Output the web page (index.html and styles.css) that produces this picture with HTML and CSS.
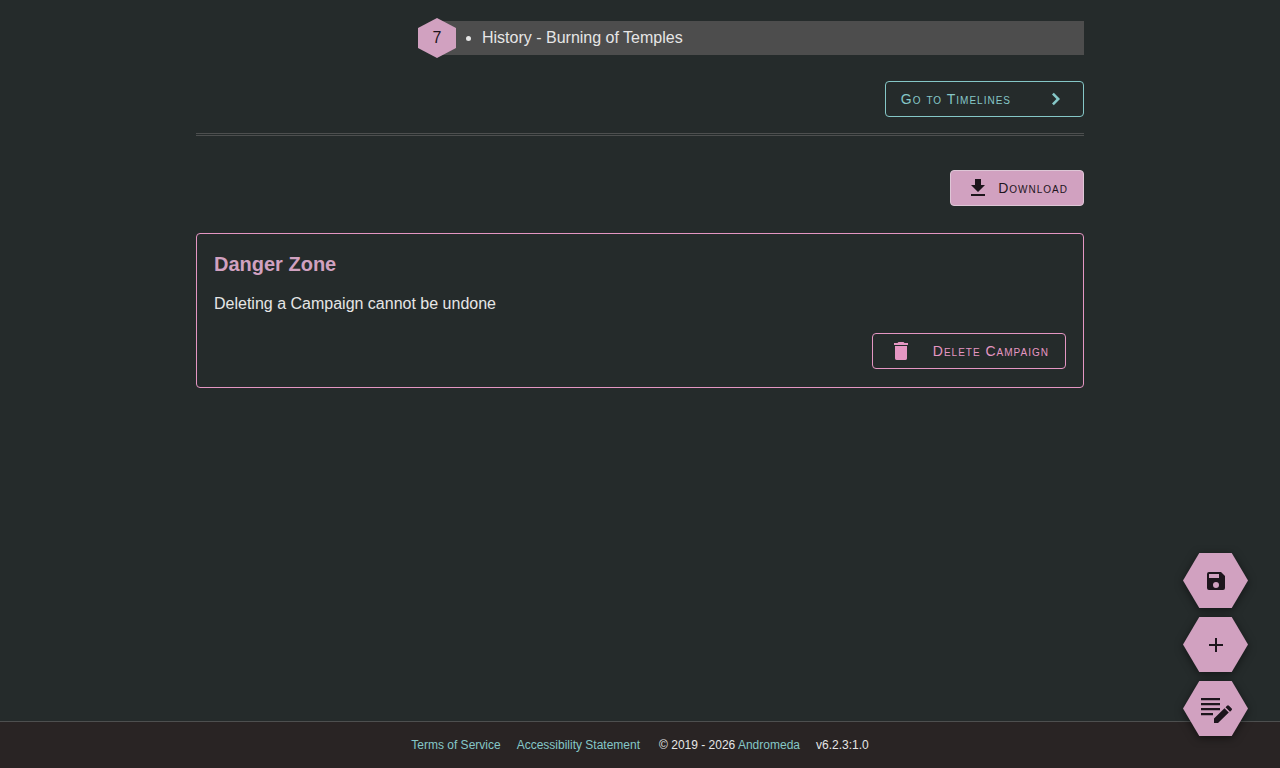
FILE: index.html
```
<!DOCTYPE html>
<html lang="en">
  <head>
    <meta charset="UTF-8" />
    <meta name="viewport" content="width=device-width, initial-scale=1.0" />
    <title>Campaign</title>
    <link rel="stylesheet" href="styles.css">
  </head>
  <body>
    <main class="container">
      <section class="timeline">
        <div class="event">
          <span class="event-count">7</span>
          <ul class="event-list">
            <li>History - Burning of Temples</li>
          </ul>
        </div>
      </section>
      <div class="actions">
        <button type="button" class="btn btn-link">
          Go to Timelines
          <svg viewBox="0 0 24 24"><path d="M9.800 5.800 8 7.600l4.400 4.400L8 16.400l1.800 1.800L16 12z"/></svg>
        </button>
      </div>
      <hr>
      <div class="actions">
        <button type="button" class="btn btn-primary">
          <svg viewBox="0 0 24 24"><path d="M19 9h-4V3H9v6H5l7 7 7-7zM5 18v2h14v-2H5z"/></svg>
          Download
        </button>
      </div>
      <section class="danger">
        <h2>Danger Zone</h2>
        <p>Deleting a Campaign cannot be undone</p>
        <div class="actions">
          <button type="button" class="btn btn-danger">
            <svg viewBox="0 0 24 24"><path d="M6 19c0 1.100.5 2 1.500 2h9c1 0 1.500-.9 1.500-2V7H6v12zM19 4h-3.500l-1-1h-5l-1 1H5v2h14V4z"/></svg>
            Delete Campaign
          </button>
        </div>
      </section>
    </main>

    <div class="fabs">
      <button type="button" class="fab" aria-label="Save">
        <span class="hex"><svg viewBox="0 0 24 24"><path d="M17 3H5a2 2 0 0 0-2 2v14a2 2 0 0 0 2 2h14a2 2 0 0 0 2-2V7l-4-4zm-5 16a3 3 0 1 1 0-6 3 3 0 0 1 0 6zm3-10H5V5h10v4z"/></svg></span>
      </button>
      <button type="button" class="fab" aria-label="Add">
        <span class="hex"><svg viewBox="0 0 24 24"><path d="M19 13h-6v6h-2v-6H5v-2h6V5h2v6h6v2z"/></svg></span>
      </button>
      <button type="button" class="fab" aria-label="Edit notes">
        <span class="hex"><svg class="notes" viewBox="0 0 32 30"><path d="M1 4h19v2.200H1zM1 9h19v2.200H1zM1 14h19v2.200H1zM1 19h12v2.200H1zM14 29v-4.500l10.500-10.300 4.300 4.300L18 29zM25.500 13.200l1.500-1.500q1-1 2 0l2.500 2.500q1 1 0 2L30 17.700z"/></svg></span>
      </button>
    </div>

    <footer>
      <a href="#">Terms of Service</a>
      <a href="#">Accessibility Statement</a>
      <span class="copyright">© 2019 - 2026 <a href="#">Andromeda</a></span>
      <span>v6.2.3:1.0</span>
    </footer>
  </body>
</html>
```
FILE: styles.css
```
* {
  box-sizing: border-box;
}
body {
  margin: 0;
  min-height: 100vh;
  display: flex;
  flex-direction: column;
  background: #252b2b;
  color: #e6e6e6;
  font-family: "Liberation Sans", Arial, sans-serif;
  font-size: 16px;
  line-height: 24px;
}
a {
  color: #85c7c7;
  text-decoration: none;
}
svg {
  width: 24px;
  height: 24px;
  fill: currentColor;
}
.container {
  flex: 1;
  width: 100%;
  max-width: 920px;
  margin: 0 auto;
  padding: 18px 16px 32px;
}
.timeline {
  margin-left: 25%;
}
.event {
  display: flex;
  align-items: center;
  height: 40px;
}
.event-count {
  z-index: 1;
  width: 38px;
  height: 40px;
  line-height: 40px;
  text-align: center;
  color: #1d151c;
  background: #d1a1c0;
  clip-path: polygon(50% 0, 100% 25%, 100% 75%, 50% 100%, 0 75%, 0 25%);
}
.event-list {
  flex: 1;
  margin: 0 0 0 -18px;
  padding: 5px 0 5px 44px;
  background: #4d4d4d;
}
.actions {
  display: flex;
  justify-content: flex-end;
}
.timeline + .actions {
  margin-top: 23px;
}
hr {
  margin: 16px 0 34px;
  border: 0;
  border-top: 3px double #4d4f4f;
}
.btn {
  display: flex;
  align-items: center;
  height: 36px;
  padding: 0 15px;
  border: 1px solid currentColor;
  border-radius: 4px;
  background: transparent;
  font-family: inherit;
  font-size: 14px;
  font-variant: small-caps;
  letter-spacing: 1px;
  cursor: pointer;
}
.btn-link {
  gap: 33px;
  color: #85c7c7;
}
.btn-primary {
  gap: 8px;
  color: #1d151c;
  background: #d1a1c0;
  border-color: #dec6d6;
}
.btn-danger {
  gap: 20px;
  padding: 0 16px;
  color: #e596c3;
}
.danger {
  margin-top: 27px;
  padding: 18px 17px;
  border: 1px solid #e596c3;
  border-radius: 4px;
}
.danger h2 {
  margin: 0 0 16px;
  color: #d1a1c0;
  font-size: 20px;
  line-height: 24px;
}
.danger p {
  margin: 0 0 17px;
}
.fabs {
  position: fixed;
  right: 32px;
  bottom: 32px;
  display: flex;
  flex-direction: column;
  gap: 9px;
}
.fab {
  padding: 0;
  border: 0;
  background: none;
  color: #1d151c;
  filter: drop-shadow(0 2px 4px rgba(0, 0, 0, 0.5));
  cursor: pointer;
}
.hex {
  display: flex;
  align-items: center;
  justify-content: center;
  width: 65px;
  height: 55px;
  background: #d1a1c0;
  clip-path: polygon(25% 0, 75% 0, 100% 50%, 75% 100%, 25% 100%, 0 50%);
}
.notes {
  width: 32px;
  height: 30px;
}
footer {
  display: flex;
  justify-content: center;
  gap: 16px;
  padding: 11px 16px;
  border-top: 1px solid #4d4f4f;
  background: #292424;
  font-size: 12px;
}
.copyright {
  margin-left: 3px;
}
```
